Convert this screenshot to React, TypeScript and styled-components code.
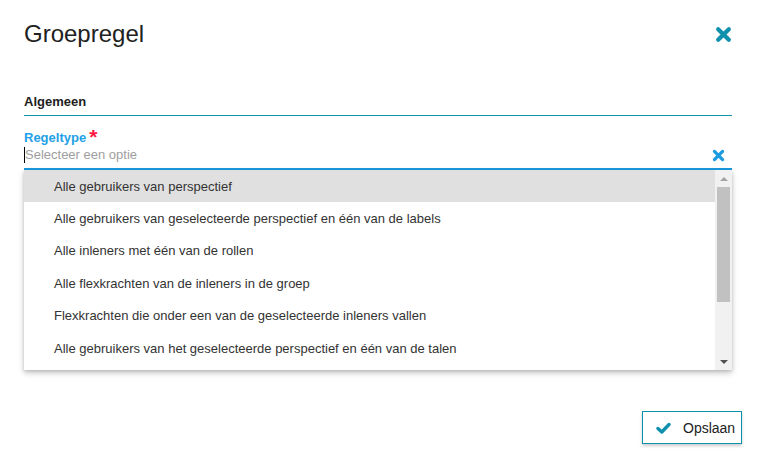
import * as React from 'react';
import styled, { createGlobalStyle } from 'styled-components';

const FONT = '"Liberation Sans", Arial, sans-serif';

const GlobalStyle = createGlobalStyle`
  html, body {
    margin: 0;
    padding: 0;
    background: #fff;
  }
  body {
    font-family: ${FONT};
    color: #212121;
  }
`;

const colors = {
  teal: '#0f91ad',
  blue: '#1b9ae0',
  label: '#23a0e6',
  red: '#ff1744',
  placeholder: '#9e9e9e',
  text: '#333333',
};

const options = [
  'Alle gebruikers van perspectief',
  'Alle gebruikers van geselecteerde perspectief en één van de labels',
  'Alle inleners met één van de rollen',
  'Alle flexkrachten van de inleners in de groep',
  'Flexkrachten die onder een van de geselecteerde inleners vallen',
  'Alle gebruikers van het geselecteerde perspectief en één van de talen',
];

const Dialog = styled.div`
  height: 462px;
  box-sizing: border-box;
  display: flex;
  flex-direction: column;
  padding: 20px 25px 18px 24px;
`;

const Header = styled.div`
  display: flex;
  flex-direction: row;
  justify-content: space-between;
  align-items: center;
  height: 28px;
`;

const Title = styled.h1`
  margin: 0;
  font-size: 24px;
  font-weight: 400;
  line-height: 28px;
  color: #212121;
`;

const IconButton = styled.button<{ size: number; color: string }>`
  border: 0;
  background: none;
  padding: 0;
  margin: 0;
  width: ${(p) => p.size}px;
  height: ${(p) => p.size}px;
  color: ${(p) => p.color};
  display: flex;
  cursor: pointer;
  svg {
    width: 100%;
    height: 100%;
  }
`;

const Section = styled.div`
  margin-top: 46px;
`;

const SectionTitle = styled.div`
  font-size: 13px;
  font-weight: 700;
  line-height: 16px;
  padding-bottom: 5px;
  border-bottom: 1px solid ${colors.teal};
  color: #212121;
`;

const Field = styled.div`
  margin-top: 14px;
  position: relative;
`;

const Label = styled.label`
  display: flex;
  align-items: flex-start;
  gap: 3px;
  font-size: 13px;
  font-weight: 700;
  line-height: 16px;
  color: ${colors.label};
`;

const Required = styled.span`
  color: ${colors.red};
  font-size: 21px;
  line-height: 16px;
  margin-top: -1px;
`;

const InputRow = styled.div`
  display: flex;
  align-items: center;
  justify-content: space-between;
  margin-top: 1px;
  padding: 0 7px 5px 0;
  border-bottom: 2px solid ${colors.blue};
`;

const Placeholder = styled.div`
  font-size: 13px;
  line-height: 16px;
  color: ${colors.placeholder};
  border-left: 1px solid #000;
  padding-left: 0;
`;

const Menu = styled.div`
  position: absolute;
  top: 100%;
  left: 0;
  right: 0;
  height: 200px;
  display: flex;
  background: #fff;
  box-shadow: 0 3px 6px rgba(0, 0, 0, 0.22), 0 1px 3px rgba(0, 0, 0, 0.12);
  z-index: 10;
`;

const OptionList = styled.ul`
  flex: 1;
  list-style: none;
  margin: 0;
  padding: 0;
  overflow: hidden;
`;

const Option = styled.li<{ active?: boolean }>`
  height: 32.4px;
  display: flex;
  align-items: center;
  padding-left: 30px;
  font-size: 13px;
  color: ${colors.text};
  background: ${(p) => (p.active ? '#e0e0e0' : '#fff')};
  white-space: nowrap;
`;

const Scrollbar = styled.div`
  width: 17px;
  background: #f1f1f1;
  display: flex;
  flex-direction: column;
  align-items: center;
`;

const Arrow = styled.div<{ down?: boolean }>`
  height: 17px;
  width: 17px;
  display: flex;
  align-items: center;
  justify-content: center;
  &::after {
    content: '';
    border-left: 4px solid transparent;
    border-right: 4px solid transparent;
    ${(p) =>
      p.down
        ? 'border-top: 4px solid #505050;'
        : 'border-bottom: 4px solid #a3a3a3;'}
  }
`;

const Thumb = styled.div`
  width: 13px;
  height: 115px;
  background: #c1c1c1;
`;

const Footer = styled.div`
  margin-top: auto;
  display: flex;
  justify-content: flex-end;
  margin-right: -10px;
`;

const SaveButton = styled.button`
  width: 100px;
  height: 33px;
  box-sizing: border-box;
  border: 1px solid ${colors.teal};
  background: #fff;
  box-shadow: 0 2px 3px rgba(0, 0, 0, 0.2);
  display: flex;
  align-items: center;
  gap: 12px;
  padding: 0 0 0 13px;
  font-family: ${FONT};
  font-size: 14px;
  color: #222;
  cursor: pointer;
  svg {
    width: 15px;
    height: 12px;
    color: ${colors.teal};
  }
`;

const Cross = () => (
  <svg viewBox="0 0 16 16" fill="none">
    <path
      d="M3 3 L13 13 M13 3 L3 13"
      stroke="currentColor"
      strokeWidth="4"
      strokeLinecap="round"
    />
  </svg>
);

const Check = () => (
  <svg viewBox="0 0 15 12" fill="none">
    <path
      d="M2 6.5 L5.8 10 L13 2.5"
      stroke="currentColor"
      strokeWidth="3.4"
      strokeLinecap="round"
      strokeLinejoin="round"
    />
  </svg>
);

export default function App() {
  return (
    <>
      <GlobalStyle />
      <Dialog>
        <Header>
          <Title>Groepregel</Title>
          <IconButton size={17} color={colors.teal} aria-label="Sluiten">
            <Cross />
          </IconButton>
        </Header>
        <Section>
          <SectionTitle>Algemeen</SectionTitle>
          <Field>
            <Label>
              Regeltype<Required>*</Required>
            </Label>
            <InputRow>
              <Placeholder>Selecteer een optie</Placeholder>
              <IconButton size={13} color={colors.blue} aria-label="Wissen">
                <Cross />
              </IconButton>
            </InputRow>
            <Menu>
              <OptionList>
                {options.map((o, i) => (
                  <Option key={o} active={i === 0}>
                    {o}
                  </Option>
                ))}
              </OptionList>
              <Scrollbar>
                <Arrow />
                <Thumb />
                <div style={{ flex: 1 }} />
                <Arrow down />
              </Scrollbar>
            </Menu>
          </Field>
        </Section>
        <Footer>
          <SaveButton>
            <Check />
            Opslaan
          </SaveButton>
        </Footer>
      </Dialog>
    </>
  );
}
